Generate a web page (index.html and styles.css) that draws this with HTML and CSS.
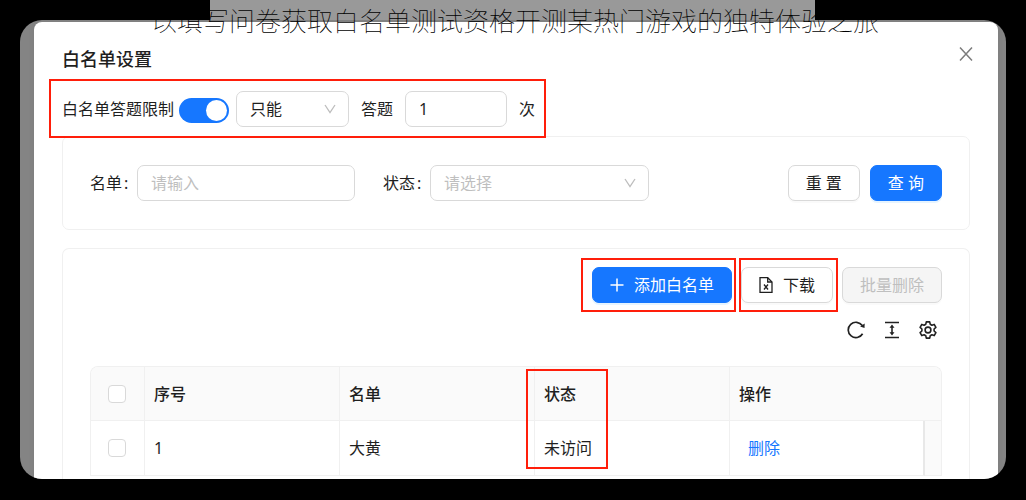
FILE: index.html
```html
<!DOCTYPE html>
<html lang="zh-CN">
<head>
<meta charset="utf-8">
<meta name="viewport" content="width=device-width, initial-scale=1">
<title>白名单设置</title>
<link rel="stylesheet" href="styles.css">
</head>
<body>
<div class="stage">
  <div class="banner"></div>
  <h1 class="headline">以填写问卷获取白名单测试资格开测某热门游戏的独特体验之旅</h1>
  <div class="frame">
    <main class="modal">
      <header class="modal-head">
        <h2 class="modal-title">白名单设置</h2>
        <button class="close" type="button" aria-label="关闭">
          <svg width="14" height="14" viewBox="0 0 14 14"><path d="M1 0.500L13 13.500M13 0.500L1 13.500" fill="none" stroke="#7d7d7d" stroke-width="1.500"/></svg>
        </button>
      </header>

      <section class="limit">
        <label class="limit-label" for="limit-on">白名单答题限制</label>
        <input class="switch" id="limit-on" type="checkbox" role="switch" checked>
        <span class="picker picker-mode">
          <select class="field" aria-label="限制方式"><option>只能</option></select>
          <svg class="arrow" width="12" height="10" viewBox="0 0 12 10"><path d="M1 1L6 8.500L11 1" fill="none" stroke="#bdbdbd" stroke-width="1.300"/></svg>
        </span>
        <label class="limit-text" for="times">答题</label>
        <input class="field times" id="times" type="text" value="1">
        <span>次</span>
        <i class="mark mark-limit"></i>
      </section>

      <form class="card search">
        <div class="item">
          <label class="item-label" for="name">名单<span class="colon">:</span></label>
          <input class="field name" id="name" type="text" placeholder="请输入">
        </div>
        <div class="item">
          <label class="item-label" for="state">状态<span class="colon">:</span></label>
          <span class="picker picker-state">
            <select class="field empty" id="state"><option>请选择</option></select>
            <svg class="arrow" width="12" height="10" viewBox="0 0 12 10"><path d="M1 1L6 8.500L11 1" fill="none" stroke="#bdbdbd" stroke-width="1.300"/></svg>
          </span>
        </div>
        <div class="search-actions">
          <button class="btn" type="reset">重 置</button>
          <button class="btn primary" type="button">查 询</button>
        </div>
      </form>

      <section class="card list">
        <div class="toolbar">
          <span class="marked">
            <button class="btn primary add" type="button">
              <svg width="14" height="14" viewBox="0 0 14 14"><path d="M7 0.500V13.500M0.500 7H13.500" fill="none" stroke="#fff" stroke-width="1.500"/></svg>
              添加白名单
            </button>
            <i class="mark mark-add"></i>
          </span>
          <span class="marked">
            <button class="btn download" type="button">
              <svg width="14" height="16" viewBox="0 0 14 16" fill="none" stroke="#1f1f1f" stroke-width="1.300"><path d="M1 0.700H8.700L13 5V15.300H1Z"/><path d="M8.700 0.700V5H13"/><path d="M5 7.500L9 12.500M9 7.500L5 12.500"/></svg>
              下载
            </button>
            <i class="mark mark-download"></i>
          </span>
          <button class="btn remove" type="button" disabled>批量删除</button>
        </div>
        <div class="tools">
          <button class="tool" type="button" aria-label="刷新">
            <svg width="18" height="18" viewBox="0 0 18 18"><path d="M15.600 12.800A7.700 7.700 0 1 1 15.300 4.600" fill="none" stroke="#222" stroke-width="1.700"/><path d="M17.700 2.500L17.500 6.900L13.100 5.600Z" fill="#222"/></svg>
          </button>
          <button class="tool" type="button" aria-label="密度">
            <svg width="18" height="18" viewBox="0 0 18 18"><path d="M2 1.500H16M2 16.500H16M9 5V13" fill="none" stroke="#222" stroke-width="1.600"/><path d="M9 3.500L11.500 6.700H6.500ZM9 14.500L11.500 11.300H6.500Z" fill="#222"/></svg>
          </button>
          <button class="tool" type="button" aria-label="列设置">
            <svg width="18" height="18" viewBox="0 0 18 18" fill="none" stroke="#222" stroke-width="1.600" stroke-linejoin="round"><path d="M7.300 0.900H10.700L11.200 3.200L12.900 4.200L15.200 3.400L16.900 6.400L15.100 8V10L16.900 11.600L15.200 14.600L12.900 13.800L11.200 14.800L10.700 17.100H7.300L6.800 14.800L5.100 13.800L2.800 14.600L1.100 11.600L2.900 10V8L1.100 6.400L2.800 3.400L5.100 4.200L6.800 3.200Z"/><circle cx="9" cy="9" r="2.900"/></svg>
          </button>
        </div>
        <div class="table-wrap">
          <table class="table">
            <colgroup><col class="col-check"><col class="col-data"><col class="col-data"><col class="col-data"><col><col class="col-gutter"></colgroup>
            <thead>
              <tr>
                <th class="check"><input class="box" type="checkbox" aria-label="全选"></th>
                <th>序号</th>
                <th>名单</th>
                <th>状态</th>
                <th colspan="2">操作</th>
              </tr>
            </thead>
            <tbody>
              <tr>
                <td class="check"><input class="box" type="checkbox" aria-label="选择第 1 行"></td>
                <td>1</td>
                <td>大黄</td>
                <td class="state-cell">未访问<i class="mark mark-state"></i></td>
                <td class="op"><a class="link" href="#">删除</a></td>
                <td class="gutter"></td>
              </tr>
            </tbody>
          </table>
        </div>
      </section>
    </main>
  </div>
</div>
</body>
</html>
```
FILE: styles.css
```css
* { box-sizing: border-box; }

body {
  margin: 0;
  background: #000;
  color: #1f1f1f;
  font: 16px/24px "Noto Sans", "Noto Sans CJK SC", sans-serif;
}

h1, h2 { margin: 0; }

button, input, select { font: inherit; color: inherit; margin: 0; }

.stage { position: relative; padding: 20px 20px 21px; }

/* Backdrop strip and headline lie over the top edge of the frame */
.banner {
  position: absolute;
  top: 0;
  left: 210px;
  right: 211px;
  height: 20px;
  background: #999;
}

.headline {
  position: absolute;
  top: 0;
  left: 4px;
  right: 0;
  z-index: 3;
  color: #000;
  font-size: 26px;
  font-weight: 100;
  line-height: 42px;
  text-align: center;
  white-space: nowrap;
}

.frame {
  position: relative;
  overflow: hidden;
  padding: 2px 8px 0 14px;
  border-radius: 22px;
  background: #848484;
}

.modal {
  padding: 0 28px;
  border-radius: 8px 8px 0 0;
  background: #fff;
  box-shadow: 0 0 6px rgba(0, 0, 0, 0.06);
}

.modal-head {
  display: flex;
  align-items: center;
  justify-content: space-between;
  height: 69px;
  padding-top: 5px;
}

.modal-title { font-size: 18px; font-weight: 500; line-height: 28px; }

.close {
  display: flex;
  padding: 0;
  margin-bottom: 10px;
  margin-right: -3px;
  border: 0;
  background: none;
}

.limit {
  position: relative;
  display: flex;
  align-items: center;
  height: 36px;
  gap: 12px;
}

.limit-label { margin-right: -7px; }

.switch {
  appearance: none;
  display: flex;
  justify-content: flex-end;
  width: 50px;
  height: 25px;
  margin-top: 2px;
  margin-right: -5px;
  padding: 2px;
  border-radius: 13px;
  background: #1677ff;
}

.switch::before {
  content: "";
  width: 21px;
  height: 21px;
  border-radius: 50%;
  background: #fff;
}

.field {
  appearance: none;
  height: 36px;
  padding: 0 13px;
  border: 1px solid #d9d9d9;
  border-radius: 7px;
  background: #fff;
}

.field::placeholder, .empty { color: #bfbfbf; opacity: 1; }

.picker { display: grid; align-items: center; }
.picker > * { grid-area: 1 / 1; }
.picker .arrow { justify-self: end; margin-right: 13px; pointer-events: none; }
.picker-mode { width: 113px; }
.picker-state { width: 219px; }
.times { width: 102px; }
.name { width: 218px; }

.card {
  border: 1px solid #f0f0f0;
  border-radius: 7px;
}

.search {
  display: flex;
  align-items: center;
  gap: 28px;
  margin-top: 9px;
  padding: 28px 27px;
}

.item { display: flex; align-items: center; }
.item-label { width: 47px; }
.colon { margin-left: 2px; }

.search-actions { display: flex; gap: 10px; margin-left: auto; }

.btn {
  display: flex;
  align-items: center;
  justify-content: center;
  height: 36px;
  padding: 0 17px;
  border: 1px solid #d9d9d9;
  border-radius: 7px;
  background: #fff;
  box-shadow: 0 2px 0 rgba(0, 0, 0, 0.02);
  white-space: nowrap;
}

.primary {
  border-color: #1677ff;
  background: #1677ff;
  box-shadow: 0 2px 0 rgba(5, 145, 255, 0.1);
  color: #fff;
}

.remove { background: #f5f5f5; color: #bfbfbf; }

.list {
  margin-top: 18px;
  padding: 18px 27px 3px;
  border-bottom: 0;
  border-radius: 7px 7px 0 0;
}

.toolbar { display: flex; justify-content: flex-end; gap: 9px; }
.marked { position: relative; }
.add, .download { gap: 10px; }

.tools {
  display: flex;
  justify-content: flex-end;
  gap: 18px;
  padding: 18px 5px 27px;
}

.tool { display: flex; padding: 0; border: 0; background: none; }

.table-wrap {
  border: 1px solid #f0f0f0;
  border-bottom: 0;
  border-radius: 8px 8px 0 0;
}

.table {
  width: 100%;
  border-collapse: separate;
  border-spacing: 0;
  table-layout: fixed;
}

.col-check { width: 54px; }
.col-data { width: 195px; }
.col-gutter { width: 16px; }

.table th, .table td {
  padding: 0 9px;
  border-right: 1px solid #f0f0f0;
  border-bottom: 1px solid #f0f0f0;
  text-align: left;
}

.table th {
  height: 54px;
  background: #fafafa;
  font-weight: 500;
}

.table td { height: 55px; }
.table th:first-child { border-top-left-radius: 7px; }
.table th:last-child { border-top-right-radius: 7px; }
.table th:last-child, .table td:last-child { border-right: 0; }
.table .check { padding: 0 17px; }
.table .op { padding: 0 18px; border-right: 2px solid #e8e8e8; }
.table .gutter { padding: 0; background: #fafafa; }

.box {
  appearance: none;
  display: block;
  width: 18px;
  height: 18px;
  border: 1px solid #d9d9d9;
  border-radius: 4px;
  background: #fff;
}

.link { color: #1677ff; text-decoration: none; }

/* Red callout outlines drawn over the controls they point at */
.mark {
  position: absolute;
  z-index: 2;
  border: 2px solid #ff1e0a;
  pointer-events: none;
}

.mark-limit { top: -12px; bottom: -11px; left: -13px; width: 497px; }
.mark-add { top: -9px; bottom: -9px; left: -11px; right: -4px; }
.mark-download { top: -9px; bottom: -9px; left: -2px; right: -5px; }
.state-cell { position: relative; }
.mark-state { top: -52px; bottom: 6px; left: -9px; width: 82px; }
```
